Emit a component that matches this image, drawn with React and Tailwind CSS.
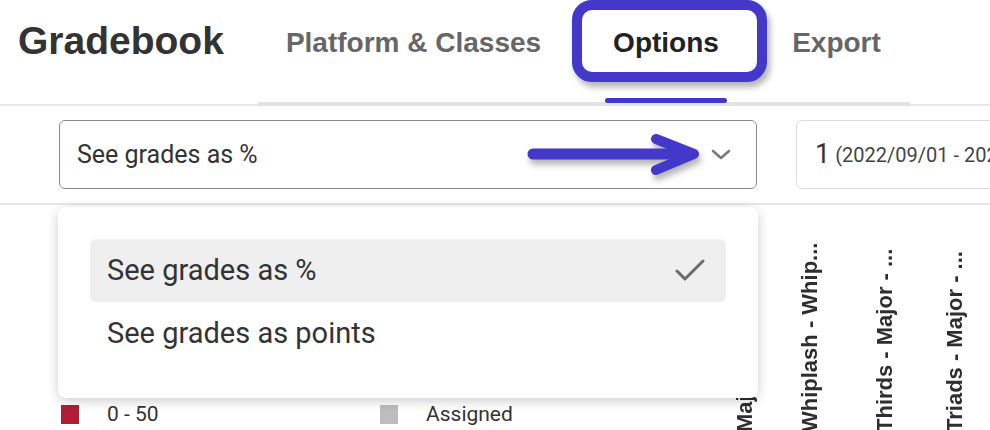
import React from 'react'

const HEAD = "font-['Liberation_Sans',Arial,sans-serif]"

function Chevron() {
  return (
    <svg width="20" height="11" viewBox="0 0 20 11" fill="none">
      <polyline points="2,2 10,9 18,2" stroke="#7a7a7a" strokeWidth="2.6" strokeLinecap="round" strokeLinejoin="round" />
    </svg>
  )
}

function Check() {
  return (
    <svg width="30" height="23" viewBox="0 0 30 23" fill="none">
      <polyline points="2,12 10,20 28,2" stroke="#6b6b6b" strokeWidth="3" strokeLinecap="round" strokeLinejoin="round" />
    </svg>
  )
}

function ColumnHeader({ label, width }) {
  return (
    <div className={`flex h-[227px] shrink-0 justify-center ${width}`}>
      <div className={`${HEAD} h-[227px] rotate-180 whitespace-nowrap text-start text-[22px] font-bold leading-[24px] text-[#2e2e2e] [writing-mode:vertical-rl]`}>
        {label}
      </div>
    </div>
  )
}

export default function App() {
  return (
    <div className="relative flex h-[430px] w-[990px] flex-col overflow-hidden bg-white font-['Roboto',sans-serif] text-[#333]">
      {/* header */}
      <header className="flex h-[106px] shrink-0 border-b-2 border-[#e8e8e8]">
        <h1 className={`${HEAD} w-[258px] pl-[18px] pt-[19px] text-[39px] font-bold leading-[44px] text-[#333]`}>
          Gradebook
        </h1>
        <nav className={`${HEAD} mb-[-2px] flex w-[652px] border-b-4 border-[#e2e2e2] pt-[27px] text-[28px] font-bold leading-[32px]`}>
          <div className="w-[311px] text-center text-[#666]">Platform &amp; Classes</div>
          <div className="relative ml-[36px] w-[122px] text-center text-[#222]">
            Options
            <span className="absolute bottom-[-1px] left-0 h-[5px] w-full rounded-full bg-[#4338c9]" />
          </div>
          <div className="ml-[36px] w-[147px] text-center text-[#666]">Export</div>
        </nav>
      </header>

      {/* controls */}
      <div className="flex h-[99px] shrink-0 items-start gap-[39px] border-b-2 border-[#e6e6e6] pl-[59px] pt-[14px]">
        <div className="flex h-[69px] w-[698px] shrink-0 items-center justify-between rounded-md border border-[#8a8a8a] pl-[17px] pr-[25px]">
          <span className="text-[25px] text-[#333]">See grades as %</span>
          <Chevron />
        </div>
        <div className="flex h-[69px] w-[320px] shrink-0 items-center whitespace-nowrap rounded-md border border-[#dcdcdc] pl-[18px]">
          <span className="text-[27px] text-[#333]">1</span>
          <span className="ml-[5px] text-[20px] text-[#444]">(2022/09/01 - 2022/12/31)</span>
        </div>
      </div>

      {/* grid area */}
      <div className="flex h-[225px] shrink-0">
        <div className="flex w-[728px] shrink-0 flex-col justify-end pb-[6px]">
          <div className="flex items-center pl-[61px] text-[21px] text-[#333]">
            <div className="flex w-[319px] items-center">
              <span className="h-[19px] w-[18px] bg-[#b31b34]" />
              <span className="ml-[28px] leading-[20px]">0 - 50</span>
            </div>
            <div className="flex items-center">
              <span className="h-[19px] w-[18px] bg-[#bdbdbd]" />
              <span className="ml-[28px] leading-[20px]">Assigned</span>
            </div>
          </div>
        </div>
        <ColumnHeader label="Major - Major - ..." width="w-[34px]" />
        <ColumnHeader label="Whiplash - Whip..." width="w-[95px]" />
        <ColumnHeader label="Thirds - Major - ..." width="w-[55px]" />
        <ColumnHeader label="Triads - Major - ..." width="w-[85px]" />
      </div>

      {/* highlight around active tab */}
      <div className="absolute left-[572px] top-0 h-[82px] w-[195px] rounded-[20px] border-[10px] border-[#4338c9] shadow-[3px_5px_6px_rgba(0,0,0,0.3)]" />

      {/* pointer arrow */}
      <svg
        className="absolute left-[520px] top-[128px] drop-shadow-[2px_5px_3px_rgba(0,0,0,0.3)]"
        width="190"
        height="55"
        viewBox="0 0 190 55"
        fill="none"
      >
        <line x1="13" y1="26" x2="165" y2="26" stroke="#4338c9" strokeWidth="11" strokeLinecap="round" />
        <polyline points="136,11 174,26 136,42" stroke="#4338c9" strokeWidth="10" strokeLinecap="round" strokeLinejoin="round" />
      </svg>

      {/* open dropdown */}
      <div className="absolute left-[58px] top-[207px] flex h-[191px] w-[700px] flex-col rounded-lg bg-white p-[32px] shadow-[0_3px_12px_rgba(0,0,0,0.2)]">
        <div className="flex h-[63px] items-center justify-between rounded-md bg-[#efefef] pl-[17px] pr-[21px]">
          <span className="text-[29px] text-[#333]">See grades as %</span>
          <Check />
        </div>
        <div className="flex h-[64px] items-center pl-[17px]">
          <span className="text-[29px] text-[#333]">See grades as points</span>
        </div>
      </div>
    </div>
  )
}
